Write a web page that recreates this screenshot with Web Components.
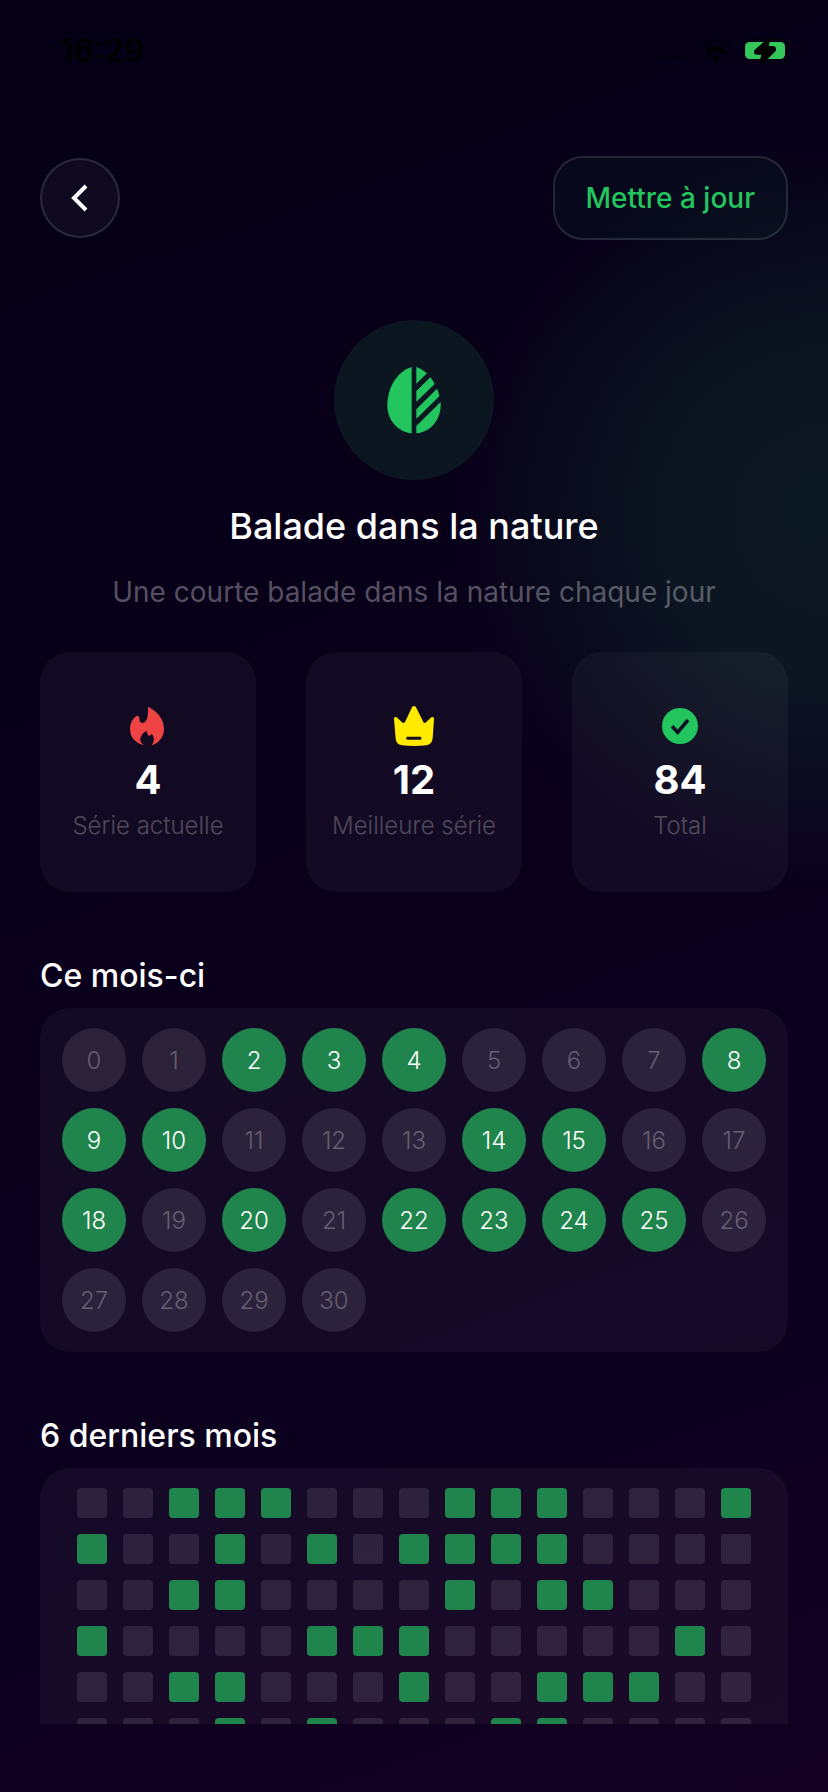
<!DOCTYPE html>
<html lang="fr">
<head>
<meta charset="utf-8">
<meta name="viewport" content="width=device-width, initial-scale=1">
<title>Balade dans la nature</title>
<style>
  body {
    margin: 0;
    color: #fff;
    font-family: Inter, "Liberation Sans", sans-serif;
    background: #07011a;
  }
</style>
</head>
<body>
<habit-screen>
  <status-bar slot="top" time="16:29"></status-bar>
  <nav-header slot="top" action="Mettre à jour"></nav-header>
  <habit-hero>
    Balade dans la nature
    <span slot="description">Une courte balade dans la nature chaque jour</span>
  </habit-hero>
  <stat-row>
    <stat-card icon="flame" value="4">Série actuelle</stat-card>
    <stat-card icon="crown" value="12">Meilleure série</stat-card>
    <stat-card icon="check" value="84">Total</stat-card>
  </stat-row>
  <habit-section title="Ce mois-ci">
    <month-days count="31" done="2,3,4,8,9,10,14,15,18,20,22,23,24,25"></month-days>
  </habit-section>
  <habit-section title="6 derniers mois">
    <history-grid days="001110001110001 100101011110000 001100001011000 100001110000010 001100010011100 000101000110000 001001100010010 100110001100100"></history-grid>
  </habit-section>
</habit-screen>

<script>
const ICONS = {
  flame: `<svg viewBox="54 48 120 120" fill="#ef4444"><path d="M115 51C138 61 162 86 162 116C162 139 150 157 125 166C130 158 133 151 131 143C130 138 128 134 124 132C123 136 120 138 116 137C112 134 111 128 110 123C101 126 96 132 94 139C87 148 92 160 103 166C78 160 60 143 60 117C60 100 68 86 80 78C84 76 88 80 88 85C88 94 91 99 97 99C109 99 115 84 114 55Q113 51 115 51Z"/></svg>`,
  crown: `<svg viewBox="42 48 120 120"><path fill="#ffea00" d="M96 52Q102 44 108 52L130 96Q133 102 138 97L154 82Q162 78 162 87L158 145Q156 164 139 166Q102 170 67 166Q50 164 47 147L42 87Q42 78 50 82L66 97Q71 102 75 96Z"/><rect x="79" y="140" width="45" height="9" rx="3" fill="#150c27"/></svg>`,
  check: `<svg viewBox="60 48 120 120"><circle cx="120" cy="108" r="54" fill="#22c55e"/><path d="M96 109L113 127L144 90" fill="none" stroke="#121426" stroke-width="11"/></svg>`
};

class BaseElement extends HTMLElement {
  constructor() {
    super();
    this.attachShadow({ mode: 'open' });
  }

  connectedCallback() {
    const template = document.createElement('template');
    template.innerHTML = this.render();
    this.shadowRoot.replaceChildren(template.content.cloneNode(true));
  }
}

class HabitScreen extends BaseElement {
  render() {
    return `
      <style>
      :host {
        display: flex;
        flex-direction: column;
        box-sizing: border-box;
        height: 100vh;
        padding-bottom: 68px;
        background:
          radial-gradient(circle 380px at 100% 520px, rgba(34, 197, 94, 0.12) 0%, rgba(34, 197, 94, 0.11) 40%, rgba(34, 197, 94, 0.06) 68%, rgba(34, 197, 94, 0) 100%),
          linear-gradient(160deg, #050016 0%, #09001a 40%, #0c001f 75%, #130020 100%);
      }

      main {
        flex: 1;
        min-height: 0;
        padding: 80px 40px 0;
        overflow-y: auto;
        scrollbar-width: none;
      }
      </style>
      <slot name="top"></slot>
      <main><slot></slot></main>
    `;
  }
}

class StatusBar extends BaseElement {
  render() {
    return `
      <style>
      :host {
        display: flex;
        align-items: center;
        justify-content: space-between;
        height: 100px;
        padding: 0 32px 0 60px;
        color: #000;
        font-size: 32px;
        font-weight: 600;
      }

      svg {
        display: block;
        width: 144px;
        height: 26px;
      }
      </style>
      <time>${this.getAttribute('time')}</time>
      <svg viewBox="96 48 432 78" aria-hidden="true">
        <g fill="#030010">
          <rect x="102" y="102" width="15" height="15" rx="4"/>
          <rect x="132" y="102" width="15" height="15" rx="4"/>
          <rect x="162" y="102" width="15" height="15" rx="4"/>
          <rect x="192" y="102" width="15" height="15" rx="4"/>
        </g>
        <path d="M242 77Q287 37 332 77" fill="none" stroke="#040012" stroke-width="12"/>
        <path d="M261 94Q287 72 313 94" fill="none" stroke="#000" stroke-width="15"/>
        <path d="M273 109Q287 99 301 109L287 123Z"/>
        <rect x="366" y="54" width="138" height="69" rx="22" fill="none" stroke="#040012" stroke-width="6"/>
        <path d="M513 80Q522 88 513 97Z" fill="#040012"/>
        <rect x="375" y="63" width="120" height="51" rx="14" fill="#34c759"/>
        <path d="M446 50L403 88Q398 101 414 101H424L418 126H431L467 90Q472 76 457 75H446L452 50Z"/>
      </svg>
    `;
  }
}

class NavHeader extends BaseElement {
  render() {
    return `
      <style>
      :host {
        display: flex;
        align-items: center;
        justify-content: space-between;
        padding: 56px 40px 0;
      }

      button {
        box-sizing: border-box;
        margin: 0;
        border: 2px solid rgba(255, 255, 255, 0.12);
        font: inherit;
        cursor: pointer;
      }

      .back {
        display: grid;
        place-items: center;
        width: 80px;
        height: 80px;
        padding: 0;
        border-radius: 50%;
        background: rgba(255, 255, 255, 0.04);
      }

      .back svg {
        width: 40px;
        height: 40px;
      }

      .update {
        height: 84px;
        padding: 0 31px;
        border-radius: 30px;
        background: rgba(34, 197, 94, 0.04);
        color: #22c55e;
        font-size: 28px;
        font-weight: 500;
      }
      </style>
      <button class="back" aria-label="Retour">
        <svg viewBox="0 0 40 40" fill="none" stroke="#fff" stroke-width="4"><path d="M26 8L14 20L26 32"/></svg>
      </button>
      <button class="update">${this.getAttribute('action')}</button>
    `;
  }
}

class HabitHero extends BaseElement {
  render() {
    return `
      <style>
      :host {
        display: flex;
        flex-direction: column;
        align-items: center;
        text-align: center;
      }

      .badge {
        display: grid;
        place-items: center;
        width: 160px;
        height: 160px;
        border-radius: 50%;
        background: #0c1621;
      }

      .badge svg {
        width: 56px;
        height: 68px;
      }

      h1 {
        margin: 24px 0;
        font-size: 36px;
        font-weight: 500;
        line-height: 44px;
      }

      p {
        margin: 0 0 40px;
        color: rgba(255, 255, 255, 0.32);
        font-size: 28px;
        line-height: 40px;
      }
      </style>
      <div class="badge">
        <svg viewBox="198 168 168 204" fill="#22c55e" aria-hidden="true">
          <path d="M275 171V370C232 366 202 330 202 286C202 232 233 183 275 171Z"/>
          <path d="M289 171Q307 176 321 190L289 221Z"/>
          <path d="M331 202Q339 211 344 222L289 275V243Z"/>
          <path d="M351 236Q356 247 358 259L289 326V298Z"/>
          <path d="M362 276C365 325 335 366 289 370V348Z"/>
        </svg>
      </div>
      <h1><slot></slot></h1>
      <p><slot name="description"></slot></p>
    `;
  }
}

class StatRow extends BaseElement {
  render() {
    return `
      <style>
      :host {
        display: grid;
        grid-template-columns: repeat(3, 1fr);
        gap: 50px;
      }
      </style>
      <slot></slot>
    `;
  }
}

class StatCard extends BaseElement {
  render() {
    return `
      <style>
      :host {
        display: flex;
        flex-direction: column;
        align-items: center;
        padding: 54px 0 50px;
        border-radius: 30px;
        background: rgba(255, 255, 255, 0.04);
        white-space: nowrap;
      }

      svg {
        width: 40px;
        height: 40px;
      }

      strong {
        margin: 10px 0 6px;
        font-size: 40px;
        font-weight: 700;
        line-height: 48px;
      }

      .label {
        color: rgba(255, 255, 255, 0.27);
        font-size: 24px;
        font-weight: 300;
        line-height: 32px;
      }
      </style>
      ${ICONS[this.getAttribute('icon')]}
      <strong>${this.getAttribute('value')}</strong>
      <span class="label"><slot></slot></span>
    `;
  }
}

class HabitSection extends BaseElement {
  render() {
    return `
      <style>
      :host {
        display: block;
        margin-top: 62px;
      }

      h2 {
        margin: 0 0 10px;
        font-size: 32px;
        font-weight: 500;
        line-height: 44px;
      }

      .card {
        padding: 20px;
        border-radius: 30px;
        background: rgba(255, 255, 255, 0.04);
      }
      </style>
      <h2>${this.getAttribute('title')}</h2>
      <div class="card"><slot></slot></div>
    `;
  }
}

class MonthDays extends BaseElement {
  render() {
    const done = this.getAttribute('done').split(',').map(Number);
    const days = Array.from({ length: Number(this.getAttribute('count')) }, (_, day) =>
      `<span class="day ${done.includes(day) ? 'done' : ''}">${day}</span>`
    );
    return `
      <style>
      :host {
        display: grid;
        grid-template-columns: repeat(auto-fill, 64px);
        justify-content: center;
        gap: 16px;
      }

      .day {
        display: grid;
        place-items: center;
        height: 64px;
        border-radius: 50%;
        background: rgba(255, 255, 255, 0.1);
        color: rgba(255, 255, 255, 0.28);
        font-size: 24px;
        font-weight: 300;
      }

      .done {
        background: #1f854c;
        color: #fff;
      }
      </style>
      ${days.join('')}
    `;
  }
}

class HistoryGrid extends BaseElement {
  render() {
    const days = this.getAttribute('days').replace(/ /g, '').split('');
    return `
      <style>
      :host {
        display: grid;
        grid-template-columns: repeat(auto-fill, 30px);
        justify-content: center;
        gap: 16px;
      }

      i {
        height: 30px;
        border-radius: 4px;
        background: rgba(255, 255, 255, 0.1);
      }

      .done {
        background: #1f854c;
      }
      </style>
      ${days.map(day => `<i class="${day === '1' ? 'done' : ''}"></i>`).join('')}
    `;
  }
}

customElements.define('habit-screen', HabitScreen);
customElements.define('status-bar', StatusBar);
customElements.define('nav-header', NavHeader);
customElements.define('habit-hero', HabitHero);
customElements.define('stat-row', StatRow);
customElements.define('stat-card', StatCard);
customElements.define('habit-section', HabitSection);
customElements.define('month-days', MonthDays);
customElements.define('history-grid', HistoryGrid);
</script>
</body>
</html>
